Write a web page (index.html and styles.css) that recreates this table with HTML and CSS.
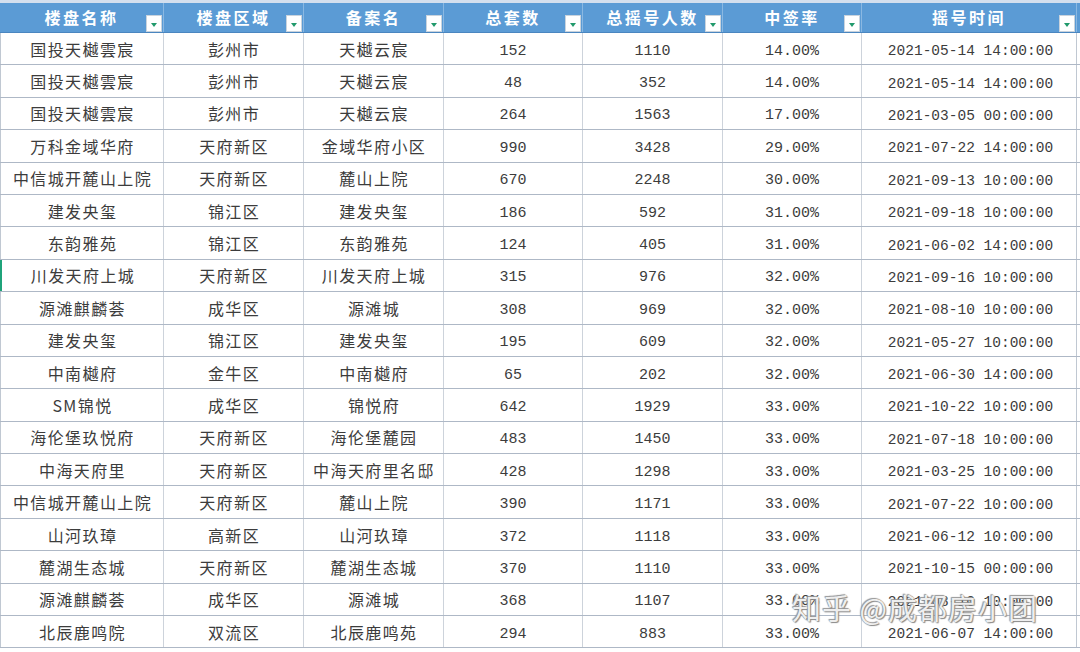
FILE: index.html
```html
<!DOCTYPE html>
<html lang="zh-CN">
<head>
<meta charset="utf-8">
<title>摇号数据</title>
<link rel="stylesheet" href="styles.css">
</head>
<body>
<div class="sheet">
  <div class="row head">
    <div class="hc">楼盘名称<span class="flt"></span></div>
    <div class="hc">楼盘区域<span class="flt"></span></div>
    <div class="hc">备案名<span class="flt"></span></div>
    <div class="hc">总套数<span class="flt"></span></div>
    <div class="hc">总摇号人数<span class="flt"></span></div>
    <div class="hc">中签率<span class="flt"></span></div>
    <div class="hc">摇号时间<span class="flt"></span></div>
    <div class="hc pad"></div>
  </div>
  <div class="row"><div class="c t">国投天樾雲宸</div><div class="c t">彭州市</div><div class="c t">天樾云宸</div><div class="c n">152</div><div class="c n">1110</div><div class="c n">14.00%</div><div class="c d">2021-05-14 14:00:00</div><div class="c pad"></div></div>
  <div class="row"><div class="c t">国投天樾雲宸</div><div class="c t">彭州市</div><div class="c t">天樾云宸</div><div class="c n">48</div><div class="c n">352</div><div class="c n">14.00%</div><div class="c d">2021-05-14 14:00:00</div><div class="c pad"></div></div>
  <div class="row"><div class="c t">国投天樾雲宸</div><div class="c t">彭州市</div><div class="c t">天樾云宸</div><div class="c n">264</div><div class="c n">1563</div><div class="c n">17.00%</div><div class="c d">2021-03-05 00:00:00</div><div class="c pad"></div></div>
  <div class="row"><div class="c t">万科金域华府</div><div class="c t">天府新区</div><div class="c t">金域华府小区</div><div class="c n">990</div><div class="c n">3428</div><div class="c n">29.00%</div><div class="c d">2021-07-22 14:00:00</div><div class="c pad"></div></div>
  <div class="row"><div class="c t">中信城开麓山上院</div><div class="c t">天府新区</div><div class="c t">麓山上院</div><div class="c n">670</div><div class="c n">2248</div><div class="c n">30.00%</div><div class="c d">2021-09-13 10:00:00</div><div class="c pad"></div></div>
  <div class="row"><div class="c t">建发央玺</div><div class="c t">锦江区</div><div class="c t">建发央玺</div><div class="c n">186</div><div class="c n">592</div><div class="c n">31.00%</div><div class="c d">2021-09-18 10:00:00</div><div class="c pad"></div></div>
  <div class="row"><div class="c t">东韵雅苑</div><div class="c t">锦江区</div><div class="c t">东韵雅苑</div><div class="c n">124</div><div class="c n">405</div><div class="c n">31.00%</div><div class="c d">2021-06-02 14:00:00</div><div class="c pad"></div></div>
  <div class="row sel"><div class="c t">川发天府上城</div><div class="c t">天府新区</div><div class="c t">川发天府上城</div><div class="c n">315</div><div class="c n">976</div><div class="c n">32.00%</div><div class="c d">2021-09-16 10:00:00</div><div class="c pad"></div></div>
  <div class="row"><div class="c t">源滩麒麟荟</div><div class="c t">成华区</div><div class="c t">源滩城</div><div class="c n">308</div><div class="c n">969</div><div class="c n">32.00%</div><div class="c d">2021-08-10 10:00:00</div><div class="c pad"></div></div>
  <div class="row"><div class="c t">建发央玺</div><div class="c t">锦江区</div><div class="c t">建发央玺</div><div class="c n">195</div><div class="c n">609</div><div class="c n">32.00%</div><div class="c d">2021-05-27 10:00:00</div><div class="c pad"></div></div>
  <div class="row"><div class="c t">中南樾府</div><div class="c t">金牛区</div><div class="c t">中南樾府</div><div class="c n">65</div><div class="c n">202</div><div class="c n">32.00%</div><div class="c d">2021-06-30 14:00:00</div><div class="c pad"></div></div>
  <div class="row"><div class="c t">SM锦悦</div><div class="c t">成华区</div><div class="c t">锦悦府</div><div class="c n">642</div><div class="c n">1929</div><div class="c n">33.00%</div><div class="c d">2021-10-22 10:00:00</div><div class="c pad"></div></div>
  <div class="row"><div class="c t">海伦堡玖悦府</div><div class="c t">天府新区</div><div class="c t">海伦堡麓园</div><div class="c n">483</div><div class="c n">1450</div><div class="c n">33.00%</div><div class="c d">2021-07-18 10:00:00</div><div class="c pad"></div></div>
  <div class="row"><div class="c t">中海天府里</div><div class="c t">天府新区</div><div class="c t">中海天府里名邸</div><div class="c n">428</div><div class="c n">1298</div><div class="c n">33.00%</div><div class="c d">2021-03-25 10:00:00</div><div class="c pad"></div></div>
  <div class="row"><div class="c t">中信城开麓山上院</div><div class="c t">天府新区</div><div class="c t">麓山上院</div><div class="c n">390</div><div class="c n">1171</div><div class="c n">33.00%</div><div class="c d">2021-07-22 10:00:00</div><div class="c pad"></div></div>
  <div class="row"><div class="c t">山河玖璋</div><div class="c t">高新区</div><div class="c t">山河玖璋</div><div class="c n">372</div><div class="c n">1118</div><div class="c n">33.00%</div><div class="c d">2021-06-12 10:00:00</div><div class="c pad"></div></div>
  <div class="row"><div class="c t">麓湖生态城</div><div class="c t">天府新区</div><div class="c t">麓湖生态城</div><div class="c n">370</div><div class="c n">1110</div><div class="c n">33.00%</div><div class="c d">2021-10-15 00:00:00</div><div class="c pad"></div></div>
  <div class="row"><div class="c t">源滩麒麟荟</div><div class="c t">成华区</div><div class="c t">源滩城</div><div class="c n">368</div><div class="c n">1107</div><div class="c n">33.00%</div><div class="c d">2021-08-10 10:00:00</div><div class="c pad"></div></div>
  <div class="row"><div class="c t">北辰鹿鸣院</div><div class="c t">双流区</div><div class="c t">北辰鹿鸣苑</div><div class="c n">294</div><div class="c n">883</div><div class="c n">33.00%</div><div class="c d">2021-06-07 14:00:00</div><div class="c pad"></div></div>
  <div class="wm">知乎 @成都房小团</div>
</div>
</body>
</html>
```
FILE: styles.css
```css
html, body {
  margin: 0;
  padding: 0;
  background: #ffffff;
  overflow: hidden;
}
.sheet {
  position: relative;
  width: 1080px;
  height: 652px;
  overflow: hidden;
  font-family: "Noto Sans CJK SC", sans-serif;
  color: #3c3c3c;
}
.row {
  display: grid;
  grid-template-columns: 163px 140px 140px 139px 140px 139px 215px 4px;
  height: 32.4px;
  box-sizing: border-box;
  border-bottom: 1px solid #aeb8c6;
}
.row.head {
  height: 33px;
  border-top: 3px solid #d3dfee;
  border-bottom: 1px solid #4a86c0;
  background: #5b9bd5;
}
.hc {
  position: relative;
  display: flex;
  align-items: center;
  justify-content: center;
  color: #ffffff;
  font-weight: 700;
  font-size: 16px;
  letter-spacing: 2.5px;
  border-left: 1px solid #8ab8e2;
  padding-bottom: 2px;
}
.hc:first-child { border-left: none; }
.flt {
  position: absolute;
  right: 1px;
  bottom: 0;
  width: 16px;
  height: 17px;
  background: #ffffff;
  border: 1px solid #c9d3dd;
  box-sizing: border-box;
}
.flt::after {
  content: "";
  position: absolute;
  left: 4px;
  top: 7px;
  border-left: 3.5px solid transparent;
  border-right: 3.5px solid transparent;
  border-top: 4px solid #219a6c;
}
.c {
  display: flex;
  align-items: center;
  justify-content: center;
  border-left: 1px solid #cdd3db;
  white-space: nowrap;
}
.t {
  font-size: 16px;
  letter-spacing: 1.4px;
  font-weight: 400;
  padding-left: 1px;
}
.n {
  font-family: "Liberation Mono", monospace;
  font-size: 15px;
  padding-top: 5px;
  box-sizing: border-box;
}
.d {
  font-family: "Liberation Mono", monospace;
  font-size: 14.5px;
  padding-left: 3px;
  padding-top: 5px;
  box-sizing: border-box;
}
.c.pad { border-left: 1px solid #c0c8d2; }
.row .c:first-child { border-left: 1px solid #c0c8d2; }
.row.sel .c:first-child { border-left: 2px solid #1fa37a; }
.wm {
  position: absolute;
  left: 792px;
  top: 586px;
  font-size: 29px;
  letter-spacing: 1px;
  color: rgba(255, 255, 255, 0.9);
  text-shadow: 0 0 1px #7a7a7a, 1px 1px 1px #8a8a8a, -1px -1px 1px #9a9a9a;
  white-space: nowrap;
}
```
